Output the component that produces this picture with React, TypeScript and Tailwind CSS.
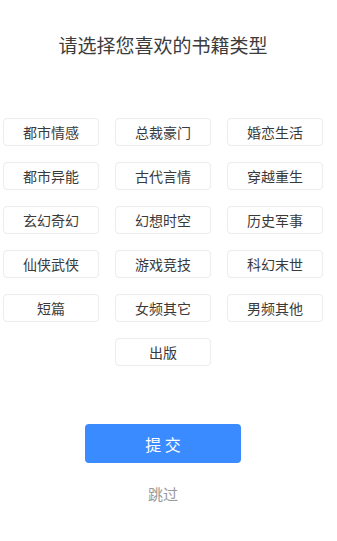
import React from "react";

const tags = [
  "都市情感", "总裁豪门", "婚恋生活",
  "都市异能", "古代言情", "穿越重生",
  "玄幻奇幻", "幻想时空", "历史军事",
  "仙侠武侠", "游戏竞技", "科幻末世",
  "短篇", "女频其它", "男频其他",
  "出版",
];

export default function App() {
  return (
    <div
      className="w-[337px] h-[541px] bg-white overflow-hidden"
      style={{ fontFamily: '"Noto Sans CJK SC", "Noto Sans", sans-serif' }}
    >
      <div className="w-[326px] flex flex-col items-center">
        <div className="mt-[31px] h-[28px] text-[19px] leading-[28px] text-[#3c3c3c]">
          请选择您喜欢的书籍类型
        </div>
        <div className="mt-[59px] pl-[3px] w-full grid grid-cols-[96px_96px_96px] gap-x-[16px] gap-y-[16px] justify-start">
          {tags.map((t, i) => (
            <div
              key={t}
              className={
                "h-[28px] border border-[#ececec] rounded-[4px] flex items-center justify-center text-[14px] text-[#3a3a3a] " +
                (i === 15 ? "col-start-2" : "")
              }
            >
              {t}
            </div>
          ))}
        </div>
        <div className="mt-[58px] w-[156px] h-[39px] rounded-[4px] bg-[#3a8bff] flex items-center justify-center text-white text-[16px]">
          提 交
        </div>
        <div className="mt-[20px] text-[15px] leading-[22px] text-[#999]">跳过</div>
      </div>
    </div>
  );
}
